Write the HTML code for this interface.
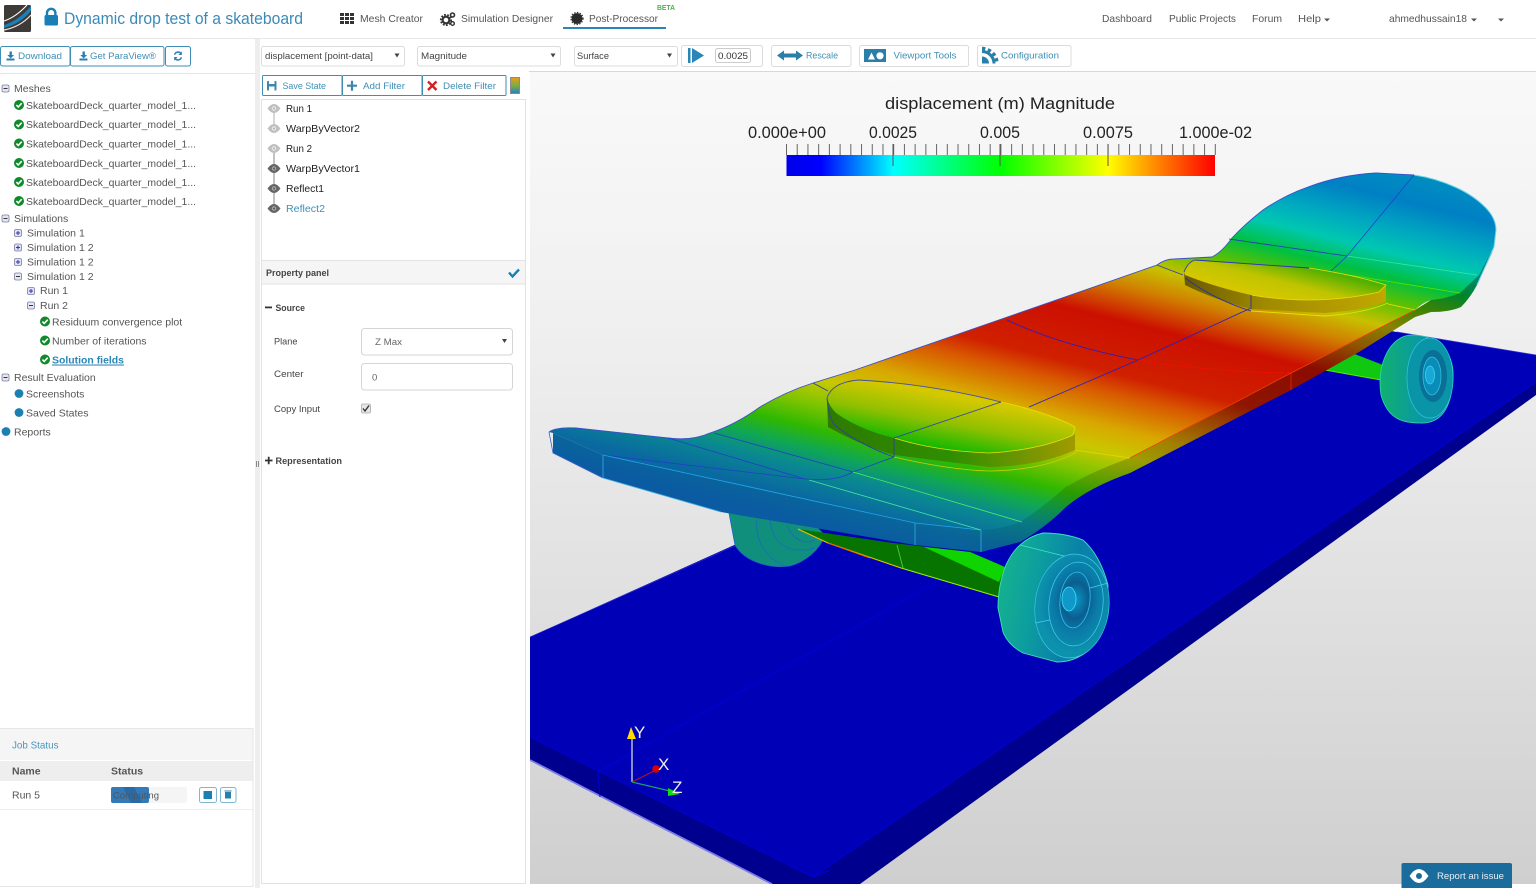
<!DOCTYPE html>
<html><head><meta charset="utf-8"><title>Post-Processor</title>
<style>
html,body{margin:0;padding:0;background:#fff;width:1536px;height:888px;overflow:hidden}
svg{display:block}
#root{filter:blur(.3px)}
text{font-family:"Liberation Sans",sans-serif;white-space:pre}
.n{font-size:10.5px;fill:#555}
.b{font-size:9.5px;fill:#3f8fb5}
.tr{font-size:10.5px;fill:#555}
.f{font-size:10.5px;fill:#222}
.p{font-size:9px;fill:#444}
.sc{font-size:17px;fill:#222}
</style></head><body>
<svg id="root" xmlns="http://www.w3.org/2000/svg" width="1536" height="888" viewBox="0 0 1536 888">
<defs>
<linearGradient id="bg" gradientUnits="userSpaceOnUse" x1="0" y1="72" x2="0" y2="884"><stop offset="0" stop-color="#f9f9f9"/><stop offset=".3" stop-color="#f0f0f0"/><stop offset=".65" stop-color="#e0e0e0"/><stop offset="1" stop-color="#cfcfcf"/></linearGradient>
<linearGradient id="deck" gradientUnits="userSpaceOnUse" x1="1000" y1="570" x2="1122.35" y2="80.6">
<stop offset="0" stop-color="#0a5fa8"/><stop offset=".048" stop-color="#0a6aa0"/><stop offset=".106" stop-color="#0a8a90"/><stop offset=".144" stop-color="#10a850"/><stop offset=".183" stop-color="#30b800"/><stop offset=".231" stop-color="#80c400"/><stop offset=".279" stop-color="#c8c800"/><stop offset=".327" stop-color="#d8a800"/><stop offset=".394" stop-color="#d85800"/><stop offset=".433" stop-color="#d02000"/><stop offset=".538" stop-color="#cc1000"/><stop offset=".587" stop-color="#d06000"/><stop offset=".606" stop-color="#d08000"/><stop offset=".654" stop-color="#c8c000"/><stop offset=".702" stop-color="#60c000"/><stop offset=".75" stop-color="#00c040"/><stop offset=".798" stop-color="#00c8b0"/><stop offset=".846" stop-color="#00a8c0"/><stop offset=".904" stop-color="#0080c4"/><stop offset=".971" stop-color="#0090c0"/><stop offset="1" stop-color="#00a0c0"/>
</linearGradient>
<linearGradient id="shade" gradientUnits="userSpaceOnUse" x1="950" y1="0" x2="1250" y2="0"><stop offset="0" stop-color="#000" stop-opacity=".04"/><stop offset="1" stop-color="#000" stop-opacity=".32"/></linearGradient>
<linearGradient id="cb" x1="0" y1="0" x2="1" y2="0"><stop offset="0" stop-color="#0000e8"/><stop offset=".08" stop-color="#0000ff"/><stop offset=".25" stop-color="#00ffff"/><stop offset=".5" stop-color="#00ff00"/><stop offset=".75" stop-color="#ffff00"/><stop offset=".87" stop-color="#ff8000"/><stop offset="1" stop-color="#ff0000"/></linearGradient>
<linearGradient id="pad1" gradientUnits="userSpaceOnUse" x1="945" y1="450" x2="955" y2="397"><stop offset="0" stop-color="#10b800"/><stop offset=".5" stop-color="#90c000"/><stop offset="1" stop-color="#d4c800"/></linearGradient>
<linearGradient id="pad1s" gradientUnits="userSpaceOnUse" x1="830" y1="0" x2="1075" y2="0"><stop offset="0" stop-color="#2e7a00"/><stop offset=".5" stop-color="#2f8f00"/><stop offset="1" stop-color="#a09a00"/></linearGradient>
<linearGradient id="pad2" gradientUnits="userSpaceOnUse" x1="1290" y1="305" x2="1300" y2="265"><stop offset="0" stop-color="#d8c800"/><stop offset=".5" stop-color="#c0c400"/><stop offset="1" stop-color="#50b000"/></linearGradient>
<linearGradient id="pad2s" gradientUnits="userSpaceOnUse" x1="1185" y1="0" x2="1386" y2="0"><stop offset="0" stop-color="#6a5a00"/><stop offset=".4" stop-color="#a08a00"/><stop offset="1" stop-color="#c0a800"/></linearGradient>
<linearGradient id="wh" gradientUnits="userSpaceOnUse" x1="1000" y1="590" x2="1100" y2="610"><stop offset="0" stop-color="#14b090"/><stop offset=".35" stop-color="#0c9ca0"/><stop offset=".7" stop-color="#0a80a8"/><stop offset="1" stop-color="#0a8cb4"/></linearGradient>
<radialGradient id="wf" gradientUnits="userSpaceOnUse" cx="1075" cy="600" r="52" gradientTransform="translate(1075 600) scale(.7 1) translate(-1075 -600)"><stop offset="0" stop-color="#0a98c8"/><stop offset=".35" stop-color="#0a5e90"/><stop offset=".6" stop-color="#0a7aa8"/><stop offset="1" stop-color="#0c92ac"/></radialGradient>
<linearGradient id="wh2" gradientUnits="userSpaceOnUse" x1="1381" y1="0" x2="1453" y2="0"><stop offset="0" stop-color="#10b070"/><stop offset=".5" stop-color="#0a9aa0"/><stop offset="1" stop-color="#0a88b8"/></linearGradient>
<linearGradient id="strip" x1="0" y1="0" x2="0" y2="1"><stop offset="0" stop-color="#e89a20"/><stop offset=".5" stop-color="#7ab040"/><stop offset="1" stop-color="#2f7fb8"/></linearGradient>
<g id="chk"><circle r="5" fill="#0f8a2a"/><path d="M-2.6 .1 L-.8 2 L2.7 -1.8" stroke="#fff" stroke-width="1.6" fill="none"/></g>
<g id="dot"><circle r="4.4" fill="#1a7fb2"/></g>
<g id="min"><rect x="-3.5" y="-3.5" width="7" height="7" rx="1.5" fill="#e4e6f4" stroke="#7a7f9a" stroke-width=".8"/><path d="M-2 0H2" stroke="#334" stroke-width="1"/></g>
<g id="plu"><rect x="-3.5" y="-3.5" width="7" height="7" rx="1.5" fill="#dfe1f6" stroke="#7a7f9a" stroke-width=".8"/><path d="M-2 0H2M0 -2V2" stroke="#33a" stroke-width="1"/></g>
<g id="eyeL"><path d="M-6.5 0Q0 -9 6.5 0Q0 9 -6.5 0Z" fill="#c0c0c0"/><circle r="2.2" fill="#e8e8e8"/><circle r="1" fill="#b0b0b0"/></g>
<g id="eyeD"><path d="M-6.5 0Q0 -9 6.5 0Q0 9 -6.5 0Z" fill="#666"/><circle r="2.2" fill="#a8a8a8"/><circle r="1" fill="#555"/></g>
</defs>

<rect width="1536" height="888" fill="#fff"/>

<!-- ============ VIEWPORT ============ -->
<rect x="530" y="72" width="1006" height="812" fill="url(#bg)"/>
<rect x="529" y="71" width="1007" height="1" fill="#d8d8d8"/>
<svg x="530" y="72" width="1006" height="812" viewBox="530 72 1006 812">
<!-- plate -->
<polygon points="530,737 530,760 772,884 860,884 1536,395 1536,382 813,877" fill="#00008e"/>
<polygon points="530,637 1258,309 1397,332 1536,355 1536,382 813,877 530,737" fill="#0000b6"/>
<path d="M530 637L737 545" stroke="#3030d0" stroke-width=".6"/>
<path d="M1397 332L1536 355" stroke="#3030d0" stroke-width=".8"/>
<path d="M530 737L813 877M813 877L1536 382" stroke="#0000d8" stroke-width="1"/>
<path d="M530 760L772 884" stroke="#7a7ae8" stroke-width="1.8"/>
<path d="M598 772L600 797M598 772L1130 473" stroke="#0000dc" stroke-width="1"/>
<path d="M813 877L830 870" stroke="#0000dc" stroke-width="1"/>

<!-- rear-right truck + wheel -->
<polygon points="1352,353 1383,365 1381,380 1325,370" fill="#10c810"/>
<path d="M1325 370L1381 380" stroke="#60e800" stroke-width="1"/>
<path d="M1381 395C1376 365 1390 335 1412 335C1438 335 1455 352 1453 380C1451 410 1440 424 1420 423C1404 423 1388 420 1381 395Z" fill="url(#wh2)"/>
<path d="M1381 395C1376 365 1390 335 1412 335C1438 335 1455 352 1453 380C1451 410 1440 424 1420 423C1404 423 1388 420 1381 395Z" fill="none" stroke="#30d8b0" stroke-width=".8"/>
<ellipse cx="1430" cy="378" rx="23" ry="40" fill="#0a94a8" stroke="#30c8e0" stroke-width=".7"/>
<ellipse cx="1433" cy="376" rx="14" ry="26" fill="#0a7098"/>
<ellipse cx="1432" cy="376" rx="9" ry="19" fill="#0a8cb8" stroke="#30c8e0" stroke-width=".7"/>
<ellipse cx="1430" cy="375" rx="4.500" ry="9" fill="#18a8d8" stroke="#40d8f0" stroke-width=".7"/>

<!-- rear-left wheel -->
<path d="M729 513L735 545C745 562 770 569 790 566C805 562 820 550 825 535L800 510Z" fill="#10907c"/>
<path d="M729 513L735 545C745 562 770 569 790 566C805 562 820 550 825 535" fill="none" stroke="#2060d0" stroke-width=".8"/>
<path d="M757 520C755 540 765 558 785 566M770 520C772 540 785 556 815 548M787 525C792 540 805 545 815 540" fill="none" stroke="#2060d0" stroke-width=".7"/>
<!-- front truck -->
<polygon points="798,529 893,543 970,552 1005,567 999,597 901,568 828,543" fill="#087400"/>
<polygon points="924,547 970,552 1005,567 999,582" fill="#10d400"/>
<path d="M798 529L828 543L901 568" fill="none" stroke="#f0c000" stroke-width="1"/>
<path d="M828 543L870 558" stroke="#f06000" stroke-width="1"/>
<path d="M901 568L999 597" stroke="#a0f000" stroke-width="1"/>
<path d="M897 545L903 568" stroke="#50d050" stroke-width=".8"/>

<!-- deck side band -->
<path d="M553 433L553 453L603 478L721 512L915 545L981 552L1020 542Q1045 528 1066 507Q1090 487 1130 473L1291 390L1359 352L1415 317L1431 312Q1450 312 1461 307Q1470 298 1477 285L1492 253L1496 230L1431 300L1415 310L1291 373L1130 458Q1090 470 1066 487L1024 520L981 530L915 523L603 455Z" fill="url(#deck)"/>
<path d="M553 433L553 453L603 478L721 512L915 545L981 552L1020 542Q1045 528 1066 507Q1090 487 1130 473L1291 390L1359 352L1415 317L1431 312Q1450 312 1461 307Q1470 298 1477 285L1492 253L1496 230L1431 300L1415 310L1291 373L1130 458Q1090 470 1066 487L1024 520L981 530L915 523L603 455Z" fill="url(#shade)"/>

<!-- deck top -->
<path d="M549 432Q556 427 576 428L668 438Q692 441 710 433Q735 425 760 407Q785 392 813 383L855 370L1157 265Q1165 259 1174 259L1212 257Q1222 252 1232 238Q1245 224 1263 210Q1285 195 1308 187Q1340 175 1376 173L1414 175Q1435 178 1455 187Q1473 195 1485 207Q1496 218 1496 230L1494 247L1479 275L1460 293Q1445 299 1431 300Q1422 303 1415 310L1291 373L1130 458Q1095 470 1066 487Q1045 505 1024 520Q1005 529 981 530L915 523L603 455L553 433Z" fill="url(#deck)"/>
<path d="M549 432Q556 427 576 428L668 438Q692 441 710 433Q735 425 760 407Q785 392 813 383L855 370L1157 265Q1165 259 1174 259L1212 257Q1222 252 1232 238Q1245 224 1263 210Q1285 195 1308 187Q1340 175 1376 173L1414 175" fill="none" stroke="#3a50c8" stroke-width=".9"/>
<path d="M1414 175Q1435 178 1455 187Q1473 195 1485 207Q1496 218 1496 230L1494 247L1477 285" fill="none" stroke="#70d8e8" stroke-width="1"/>
<path d="M549 432L553 453L603 478" fill="none" stroke="#4060d0" stroke-width=".8"/>
<path d="M603 478L721 512" fill="none" stroke="#40b0e8" stroke-width=".8"/>

<!-- deck mesh lines -->
<g fill="none" stroke-width=".8">
<path d="M603 455L805 479M668 438L805 479M714 433L853 472" stroke="#2040c8"/>
<path d="M805 479Q835 482 853 472L894 457" stroke="#2040c8"/>
<path d="M813 383L828 391" stroke="#2a40b0"/>
<path d="M1007 320Q1060 345 1138 360" stroke="#2020c8"/>
<path d="M1029 407L1138 360L1251 308" stroke="#2020c8"/>
<path d="M1138 360Q1210 372 1291 373" stroke="#f01000"/>
<path d="M1157 265L1183 275" stroke="#2a40b0"/>
<path d="M1251 295L1309 268" stroke="#2a30c0"/>
<path d="M1229 239L1347 256" stroke="#2a30c0"/>
<path d="M1347 256L1477 275" stroke="#30e8a0"/>
<path d="M1414 175L1347 256L1330 272" stroke="#2040d0"/>
<path d="M1330 272L1460 293" stroke="#60e000"/>
<path d="M603 455L915 523L981 530" stroke="#20a8e8"/>
<path d="M809 480L981 530" stroke="#40e8a0"/>
<path d="M853 472L1022 522" stroke="#50f060"/>
<path d="M603 455V478M915 523V545M981 530V552" stroke="#30b0d8"/>
<path d="M1291 373V390" stroke="#f02000"/>
<path d="M1291 373L1130 458M1415 310L1291 373" stroke="#f04000"/>
</g>

<!-- pad 1 -->
<path d="M827 398L828 427Q860 445 894 455L989 467Q1040 466 1075 450L1075 427Z" fill="url(#pad1s)"/>
<path d="M827 398Q832 382 859 380Q930 384 1001 402Q1050 413 1075 427Q1079 432 1073 435Q1040 450 989 453Q935 451 894 438Q860 430 836 413Q829 406 827 398Z" fill="url(#pad1)"/>
<path d="M827 398Q832 382 859 380Q930 384 1001 402" fill="none" stroke="#4050a0" stroke-width=".9"/>
<path d="M1001 402Q1050 413 1075 427L1073 435Q1040 450 989 453Q935 451 894 438" fill="none" stroke="#e8e000" stroke-width=".8"/>
<path d="M894 438L1001 402M894 438V457M827 398Q829 420 836 426Q860 445 894 457" fill="none" stroke="#2a40b0" stroke-width=".9"/>
<path d="M894 457Q950 470 989 471Q1045 470 1077 452" fill="none" stroke="#c8d000" stroke-width=".8"/>
<path d="M1075 450L1130 458" stroke="#e8d000" stroke-width=".9"/>

<!-- pad 2 -->
<path d="M1184 272L1185 285Q1215 300 1251 309L1325 313Q1365 310 1386 302V285Z" fill="url(#pad2s)"/>
<path d="M1184 272Q1188 262 1195 260L1309 268Q1355 275 1386 285L1379 292Q1345 300 1308 300Q1280 300 1251 295Q1215 287 1185 275Z" fill="url(#pad2)"/>
<path d="M1195 260L1309 268" stroke="#2a30c0" stroke-width=".9" fill="none"/>
<path d="M1184 272Q1188 262 1195 260" stroke="#2a40a0" stroke-width=".9" fill="none"/>
<path d="M1309 268Q1355 275 1386 285L1379 292Q1345 300 1308 300Q1280 300 1251 295" stroke="#e8e000" stroke-width=".8" fill="none"/>
<path d="M1251 295V309M1185 278Q1215 300 1251 311" stroke="#2a30a8" stroke-width=".9" fill="none"/>
<path d="M1251 311L1325 316Q1365 313 1388 303" stroke="#e8e000" stroke-width=".9" fill="none"/>
<path d="M1388 304L1415 310" stroke="#e8e000" stroke-width=".8"/>

<!-- front wheel -->
<path d="M1043 533Q1065 533 1083 540Q1100 555 1108 585Q1108 625 1089 650Q1075 662 1057 662L1023 653Q1008 645 1003 632L998 608Q998 585 1006 565Q1012 552 1020 545Q1030 536 1043 533Z" fill="url(#wh)"/>
<path d="M1043 533Q1065 533 1083 540Q1100 555 1108 585Q1108 625 1089 650Q1075 662 1057 662L1023 653Q1008 645 1003 632L998 608Q998 585 1006 565Q1012 552 1020 545Q1030 536 1043 533Z" fill="none" stroke="#40e0b8" stroke-width=".9"/>
<path d="M1020 545L1068 557" stroke="#40e8c0" stroke-width=".7" fill="none"/>
<ellipse cx="1072" cy="606" rx="37" ry="52" transform="rotate(6 1072 606)" fill="url(#wf)" stroke="#40c8e8" stroke-width=".7"/>
<ellipse cx="1076" cy="604" rx="27" ry="42" transform="rotate(6 1076 604)" fill="none" stroke="#40d0f0" stroke-width=".7"/>
<ellipse cx="1075" cy="600" rx="15" ry="28" transform="rotate(6 1075 600)" fill="none" stroke="#30c0e8" stroke-width=".8"/>
<ellipse cx="1069" cy="599" rx="7" ry="12" fill="#1098c8" stroke="#40e0f8" stroke-width=".8"/>
<path d="M1090 588L1108 583M1035 623L1050 620" stroke="#40d0f0" stroke-width=".7" fill="none"/>

<!-- triad -->
<path d="M632 782V739" stroke="#e8e8e8" stroke-width="1.2"/>
<path d="M631 727L636 739H627Z" fill="#ffdc00"/>
<path d="M632 782L656 770" stroke="#b01818" stroke-width="1.2"/>
<circle cx="656" cy="769" r="3.8" fill="#d80000"/>
<path d="M632 782L670 791" stroke="#20a060" stroke-width="1.2"/>
<path d="M668 788L680 794L668 796Z" fill="#10e010"/>
<text x="634" y="738" font-size="17" fill="#f0f0f0">Y</text>
<text x="658" y="770" font-size="17" fill="#f0f0f0">X</text>
<text x="672" y="793" font-size="17" fill="#f0f0f0">Z</text>

<!-- color bar -->
<text class="sc" x="885" y="109" textLength="230" lengthAdjust="spacingAndGlyphs">displacement (m) Magnitude</text>
<text class="sc" x="748" y="138" textLength="78" lengthAdjust="spacingAndGlyphs">0.000e+00</text>
<text class="sc" x="869" y="138" textLength="48" lengthAdjust="spacingAndGlyphs">0.0025</text>
<text class="sc" x="980" y="138" textLength="40" lengthAdjust="spacingAndGlyphs">0.005</text>
<text class="sc" x="1083" y="138" textLength="50" lengthAdjust="spacingAndGlyphs">0.0075</text>
<text class="sc" x="1179" y="138" textLength="73" lengthAdjust="spacingAndGlyphs">1.000e-02</text>
<rect x="786.5" y="155" width="428.5" height="21" fill="url(#cb)"/>
<line x1="786" y1="149.5" x2="1216" y2="149.5" stroke="#666" stroke-width="11" stroke-dasharray="1 9.72"/>
<path d="M893 144V166M1000 144V166M1108 144V166" stroke="#555" stroke-width="1"/>
</svg>

<!-- ============ HEADER ============ -->
<rect x="0" y="0" width="1536" height="38" fill="#fff"/>
<rect x="0" y="38" width="1536" height="1" fill="#e8e8e8"/>
<rect x="4" y="5" width="27" height="27" rx="1.500" fill="#3e3a38"/>
<path d="M4 25Q18 21 31 6V11Q20 24 4 28Z" fill="#1a80bc"/>
<path d="M4 21Q16 17 27 5" stroke="#fff" stroke-width="1" fill="none"/>
<path d="M4 30Q20 27 31 15" stroke="#e8e8e8" stroke-width="1.200" fill="none"/>
<path d="M47 16V13a4.2 4.2 0 0 1 8.4 0V16" fill="none" stroke="#1a7fb5" stroke-width="2.4"/>
<rect x="44.500" y="15" width="13.500" height="10.500" rx="1.500" fill="#1a7fb5"/>
<text x="64" y="24" font-size="16.5" fill="#3a8ab8" textLength="239" lengthAdjust="spacingAndGlyphs">Dynamic drop test of a skateboard</text>

<g fill="#333"><rect x="340" y="13" width="4" height="3"/><rect x="345" y="13" width="4" height="3"/><rect x="350" y="13" width="4" height="3"/><rect x="340" y="17" width="4" height="3"/><rect x="345" y="17" width="4" height="3"/><rect x="350" y="17" width="4" height="3"/><rect x="340" y="21" width="4" height="3"/><rect x="345" y="21" width="4" height="3"/><rect x="350" y="21" width="4" height="3"/></g>
<text class="n" x="360" y="22" textLength="63" lengthAdjust="spacingAndGlyphs">Mesh Creator</text>
<circle cx="446" cy="20" r="3.4" fill="none" stroke="#333" stroke-width="2.2"/>
<circle cx="446" cy="20" r="5.2" fill="none" stroke="#333" stroke-width="1.8" stroke-dasharray="1.8 1.4"/>
<circle cx="452.500" cy="15" r="2" fill="none" stroke="#333" stroke-width="1.6"/>
<circle cx="452.500" cy="23.500" r="1.8" fill="none" stroke="#333" stroke-width="1.4"/>
<text class="n" x="461" y="22" textLength="92" lengthAdjust="spacingAndGlyphs">Simulation Designer</text>
<circle cx="577" cy="18.5" r="5.4" fill="#2b2b2b"/>
<circle cx="577" cy="18.5" r="6" fill="none" stroke="#2b2b2b" stroke-width="1.2" stroke-dasharray="1.4 1.4"/>
<text class="n" x="589" y="22" textLength="69" lengthAdjust="spacingAndGlyphs">Post-Processor</text>
<rect x="563" y="27" width="103" height="2" fill="#2a86b5"/>
<text x="657" y="10" font-size="7" font-weight="bold" fill="#4cb04c" textLength="18" lengthAdjust="spacingAndGlyphs">BETA</text>

<text class="n" x="1102" y="22" textLength="50" lengthAdjust="spacingAndGlyphs">Dashboard</text>
<text class="n" x="1169" y="22" textLength="67" lengthAdjust="spacingAndGlyphs">Public Projects</text>
<text class="n" x="1252" y="22" textLength="30" lengthAdjust="spacingAndGlyphs">Forum</text>
<text class="n" x="1298" y="22" textLength="23" lengthAdjust="spacingAndGlyphs">Help</text>
<path d="M1324 18.5h6l-3 3z" fill="#555"/>
<text class="n" x="1389" y="22" textLength="78" lengthAdjust="spacingAndGlyphs">ahmedhussain18</text>
<path d="M1471 18.5h6l-3 3z" fill="#555"/>
<path d="M1498 18.5h6l-3 3z" fill="#555"/>

<!-- ============ LEFT TOOLBAR ============ -->
<g fill="#fff" stroke="#3f8fb5" stroke-width="1">
<rect x=".5" y="46.5" width="69.5" height="19.5" rx="2"/>
<rect x="70.5" y="46.5" width="93.5" height="19.5" rx="2"/>
<rect x="165.5" y="46.5" width="25" height="19.5" rx="2"/>
</g>
<g fill="#2a7fae">
<path d="M9.5 51.500h2.400v3.500h2.200l-3.400 3.400-3.400-3.400h2.200zM6.500 58.500h8v2H6.500z"/>
<path d="M82.500 51.500h2.400v3.500h2.200l-3.400 3.400-3.400-3.400h2.200zM79.500 58.500h8v2H79.500z"/>
</g>
<text class="b" x="18" y="59" textLength="44" lengthAdjust="spacingAndGlyphs">Download</text>
<text class="b" x="90" y="59" textLength="66" lengthAdjust="spacingAndGlyphs">Get ParaView®</text>
<path d="M174.6 54.6A3.6 3.6 0 0 1 181 53.6M181.4 57.4A3.6 3.6 0 0 1 175 58.4" fill="none" stroke="#2a7fae" stroke-width="1.5"/>
<path d="M181.8 51.4V55H178.4zM174.2 60.6V57H177.6z" fill="#2a7fae"/>
<rect x="0" y="73" width="255" height="1" fill="#e6e6e6"/>
<rect x="255" y="39" width="5" height="849" fill="#eeeeee"/>
<rect x="256" y="461" width="1" height="6" fill="#888"/><rect x="258" y="461" width="1" height="6" fill="#888"/>

<!-- ============ TREE ============ -->
<use href="#min" x="5.5" y="88.5"/><text class="tr" x="14" y="92">Meshes</text>
<use href="#chk" x="19" y="105"/><text class="tr" x="26" y="109" textLength="170" lengthAdjust="spacingAndGlyphs">SkateboardDeck_quarter_model_1...</text>
<use href="#chk" x="19" y="124.5"/><text class="tr" x="26" y="128" textLength="170" lengthAdjust="spacingAndGlyphs">SkateboardDeck_quarter_model_1...</text>
<use href="#chk" x="19" y="143.5"/><text class="tr" x="26" y="147.5" textLength="170" lengthAdjust="spacingAndGlyphs">SkateboardDeck_quarter_model_1...</text>
<use href="#chk" x="19" y="163"/><text class="tr" x="26" y="167" textLength="170" lengthAdjust="spacingAndGlyphs">SkateboardDeck_quarter_model_1...</text>
<use href="#chk" x="19" y="182"/><text class="tr" x="26" y="186" textLength="170" lengthAdjust="spacingAndGlyphs">SkateboardDeck_quarter_model_1...</text>
<use href="#chk" x="19" y="201"/><text class="tr" x="26" y="205" textLength="170" lengthAdjust="spacingAndGlyphs">SkateboardDeck_quarter_model_1...</text>
<use href="#min" x="5.5" y="218.5"/><text class="tr" x="14" y="222">Simulations</text>
<use href="#plu" x="18" y="233"/><text class="tr" x="27" y="236.500">Simulation 1</text>
<use href="#plu" x="18" y="247.500"/><text class="tr" x="27" y="251">Simulation 1 2</text>
<use href="#plu" x="18" y="262"/><text class="tr" x="27" y="265.500">Simulation 1 2</text>
<use href="#min" x="18" y="276.500"/><text class="tr" x="27" y="280">Simulation 1 2</text>
<use href="#plu" x="31" y="291"/><text class="tr" x="40" y="294">Run 1</text>
<use href="#min" x="31" y="305.500"/><text class="tr" x="40" y="309">Run 2</text>
<use href="#chk" x="45" y="321.500"/><text class="tr" x="52" y="325.500">Residuum convergence plot</text>
<use href="#chk" x="45" y="340.500"/><text class="tr" x="52" y="344.500">Number of iterations</text>
<use href="#chk" x="45" y="359.500"/><text x="52" y="363.500" font-size="10.5" font-weight="bold" fill="#2a86b5" text-decoration="underline" textLength="72" lengthAdjust="spacingAndGlyphs">Solution fields</text>
<use href="#min" x="5.5" y="377.500"/><text class="tr" x="14" y="381">Result Evaluation</text>
<use href="#dot" x="19" y="393.500"/><text class="tr" x="26" y="397.500">Screenshots</text>
<use href="#dot" x="19" y="412.500"/><text class="tr" x="26" y="416.500">Saved States</text>
<use href="#dot" x="6" y="431.500"/><text class="tr" x="14" y="435.500">Reports</text>

<!-- ============ JOB STATUS ============ -->
<rect x="-2" y="728.500" width="255" height="158" fill="#fff" stroke="#e6e6e6"/>
<rect x="0" y="729" width="252.500" height="31" fill="#f5f5f5"/>
<text x="12" y="748.500" font-size="10.500" fill="#4b96bf" textLength="46.500" lengthAdjust="spacingAndGlyphs">Job Status</text>
<rect x="0" y="761" width="252.500" height="20" fill="#eeeeee"/>
<text x="12" y="774.500" font-size="10.500" font-weight="bold" fill="#555">Name</text>
<text x="111" y="774.500" font-size="10.500" font-weight="bold" fill="#555">Status</text>
<text class="tr" x="12" y="798.500">Run 5</text>
<rect x="111" y="787" width="76" height="16" rx="2" fill="#f5f5f5"/>
<rect x="111" y="787" width="38" height="16" rx="2" fill="#337ab7"/>
<path d="M123 787H134L142 803H131Z" fill="#2a6aa6"/>
<text x="113" y="798.500" font-size="9.500" fill="#555" textLength="46" lengthAdjust="spacingAndGlyphs">Computing</text>
<rect x="199.500" y="787.500" width="17" height="15" rx="2" fill="#fff" stroke="#7fb6d2" stroke-width="1"/>
<rect x="203.500" y="791" width="8.500" height="8" fill="#1a7fb2"/>
<rect x="220.500" y="787.500" width="15.500" height="15" rx="2" fill="#fff" stroke="#7fb6d2" stroke-width="1"/>
<path d="M225 792h6v6.500h-6zM224.500 790.500h7v1h-7z" fill="#2a7fae"/>
<rect x="0" y="809" width="252.500" height="1" fill="#eeeeee"/>

<!-- ============ MIDDLE TOOLBAR ============ -->
<g fill="#fff" stroke="#dcdcdc" stroke-width="1">
<rect x="261.500" y="46.500" width="143" height="19.500" rx="2"/>
<rect x="417.500" y="46.500" width="143" height="19.500" rx="2"/>
<rect x="574.500" y="46.500" width="103" height="19.500" rx="2"/>
<rect x="681.500" y="45.500" width="81" height="21" rx="2"/>
<rect x="771.500" y="45.500" width="79.500" height="21" rx="2"/>
<rect x="859.500" y="45.500" width="109" height="21" rx="2"/>
<rect x="977.500" y="45.500" width="93.500" height="21" rx="2"/>
</g>
<text class="p" x="265" y="59" textLength="108" lengthAdjust="spacingAndGlyphs" fill="#555">displacement [point-data]</text>
<text class="p" x="421" y="59" textLength="46" lengthAdjust="spacingAndGlyphs">Magnitude</text>
<text class="p" x="577" y="59" textLength="32" lengthAdjust="spacingAndGlyphs">Surface</text>
<path d="M394.500 53.500h5l-2.500 4zM550.500 53.500h5l-2.500 4zM667 53.500h5l-2.500 4z" fill="#444"/>
<rect x="688" y="48" width="2.500" height="15" fill="#2a86b5"/>
<path d="M692 48L704 55.500L692 63Z" fill="#2a86b5"/>
<rect x="715.500" y="48.500" width="35" height="14" rx="2" fill="#fff" stroke="#ccc"/>
<text x="718" y="59" font-size="9.500" fill="#333" textLength="30" lengthAdjust="spacingAndGlyphs">0.0025</text>
<path d="M777 55.500L784 50.500V53.500H796V50.500L803 55.500L796 60.500V57.500H784V60.500Z" fill="#2a7fa8"/>
<text class="b" x="806" y="58.500" textLength="32" lengthAdjust="spacingAndGlyphs">Rescale</text>
<rect x="864" y="49" width="22" height="13" fill="#2a7fa8"/>
<path d="M868 59.500L871.500 52.500L875 59.500Z" fill="#fff"/><circle cx="880" cy="55.800" r="3.600" fill="#fff"/>
<text class="b" x="893.500" y="58.500" textLength="63" lengthAdjust="spacingAndGlyphs">Viewport Tools</text>
<path d="M982 56.500A7 7 0 0 1 989 63.500H982Z" fill="#2a7fa8"/>
<path d="M982 51.500A12 12 0 0 1 994 63.500" fill="none" stroke="#2a7fa8" stroke-width="3"/>
<path d="M982 48.500A15 15 0 0 1 997 63.500" fill="none" stroke="#2a7fa8" stroke-width="3.400" stroke-dasharray="3.400 2.600"/>
<text class="b" x="1001" y="58.500" textLength="58" lengthAdjust="spacingAndGlyphs">Configuration</text>

<!-- ============ FILTER PANEL ============ -->
<rect x="261.500" y="99.500" width="264" height="784" fill="#fff" stroke="#e2e2e2"/>
<g fill="#fff" stroke="#3f8fb5" stroke-width="1">
<rect x="262.500" y="75.500" width="79.500" height="20" rx="1"/>
<rect x="342.500" y="75.500" width="79.500" height="20" rx="1"/>
<rect x="422.500" y="75.500" width="83.500" height="20" rx="1"/>
</g>
<rect x="267" y="81" width="9.500" height="9.500" rx="1" fill="#3b87ad"/><rect x="269" y="81" width="5.500" height="3" fill="#fff"/><rect x="269" y="86.500" width="5.500" height="4" fill="#fff"/>
<text class="b" x="282.500" y="89" textLength="43.500" lengthAdjust="spacingAndGlyphs">Save State</text>
<path d="M347 85.700h10M352 80.700v10" stroke="#3b87ad" stroke-width="2.200"/>
<text class="b" x="363" y="89" textLength="42" lengthAdjust="spacingAndGlyphs">Add Filter</text>
<path d="M428 81.500L436.500 90M436.500 81.500L428 90" stroke="#d42020" stroke-width="2.400"/>
<text class="b" x="443" y="89" textLength="53" lengthAdjust="spacingAndGlyphs">Delete Filter</text>
<rect x="510" y="77" width="10" height="17" fill="#8a8a8a"/>
<rect x="511" y="78" width="8" height="15" fill="url(#strip)"/>

<path d="M274 108V128" stroke="#bdbdbd" stroke-width="1.200"/>
<path d="M274 148V208" stroke="#9a9a9a" stroke-width="1.200"/>
<use href="#eyeL" x="274" y="108.500"/><use href="#eyeL" x="274" y="128.500"/><use href="#eyeL" x="274" y="148.500"/>
<use href="#eyeD" x="274" y="168.500"/><use href="#eyeD" x="274" y="188.500"/><use href="#eyeD" x="274" y="208.500"/>
<text class="f" x="286" y="112" textLength="26" lengthAdjust="spacingAndGlyphs">Run 1</text>
<text class="f" x="286" y="132" textLength="74" lengthAdjust="spacingAndGlyphs">WarpByVector2</text>
<text class="f" x="286" y="152" textLength="26" lengthAdjust="spacingAndGlyphs">Run 2</text>
<text class="f" x="286" y="172" textLength="74" lengthAdjust="spacingAndGlyphs">WarpByVector1</text>
<text class="f" x="286" y="192" textLength="38" lengthAdjust="spacingAndGlyphs">Reflect1</text>
<text x="286" y="212" font-size="10.500" fill="#3f8fb5" textLength="39" lengthAdjust="spacingAndGlyphs">Reflect2</text>

<rect x="262" y="261" width="263" height="23" fill="#f5f5f5"/>
<path d="M262 260.500H525M262 284H525" stroke="#e2e2e2" stroke-width="1"/>
<text class="p" x="266" y="276" font-weight="bold" textLength="63" lengthAdjust="spacingAndGlyphs">Property panel</text>
<path d="M509 272.500L512.500 276.500L519 269.500" fill="none" stroke="#1a7fb2" stroke-width="2.400"/>
<rect x="265" y="306.500" width="7" height="1.800" fill="#333"/>
<text class="p" x="275.500" y="311" font-weight="bold" textLength="29.500" lengthAdjust="spacingAndGlyphs">Source</text>
<text class="p" x="274" y="344.500" textLength="23.500" lengthAdjust="spacingAndGlyphs">Plane</text>
<rect x="361.500" y="328.500" width="151" height="26.500" rx="3" fill="#fff" stroke="#d5d5d5"/>
<text x="375" y="345" font-size="9.500" fill="#666" textLength="27" lengthAdjust="spacingAndGlyphs">Z Max</text>
<path d="M502 339h5l-2.500 4z" fill="#444"/>
<text class="p" x="274" y="377" textLength="29.500" lengthAdjust="spacingAndGlyphs">Center</text>
<rect x="361.500" y="363.500" width="151" height="26.500" rx="3" fill="#fff" stroke="#d5d5d5"/>
<text x="372" y="380.500" font-size="9.500" fill="#666">0</text>
<text class="p" x="274" y="412" textLength="46" lengthAdjust="spacingAndGlyphs">Copy Input</text>
<rect x="361.500" y="404" width="9" height="9" rx="1.500" fill="#e6e6e6" stroke="#aaa" stroke-width=".8"/>
<path d="M363 408.500L365 411L369 405.500" fill="none" stroke="#333" stroke-width="1.400"/>
<path d="M265 460.500h7.500M268.700 456.700v7.500" stroke="#333" stroke-width="1.800"/>
<text class="p" x="275.500" y="464" font-weight="bold" textLength="66.500" lengthAdjust="spacingAndGlyphs">Representation</text>

<!-- ============ REPORT BUTTON ============ -->
<path d="M1401.500 888V865a2 2 0 0 1 2-2H1510a2 2 0 0 1 2 2V888Z" fill="#1a6c9c"/>
<path d="M1409.500 876Q1419 862 1428.500 876Q1419 890 1409.500 876Z" fill="#fff"/>
<circle cx="1419" cy="876" r="3" fill="#1a6c9c"/>
<text x="1437" y="879" font-size="9.500" fill="#e8f0f6" textLength="67" lengthAdjust="spacingAndGlyphs">Report an issue</text>
</svg>
</body></html>
